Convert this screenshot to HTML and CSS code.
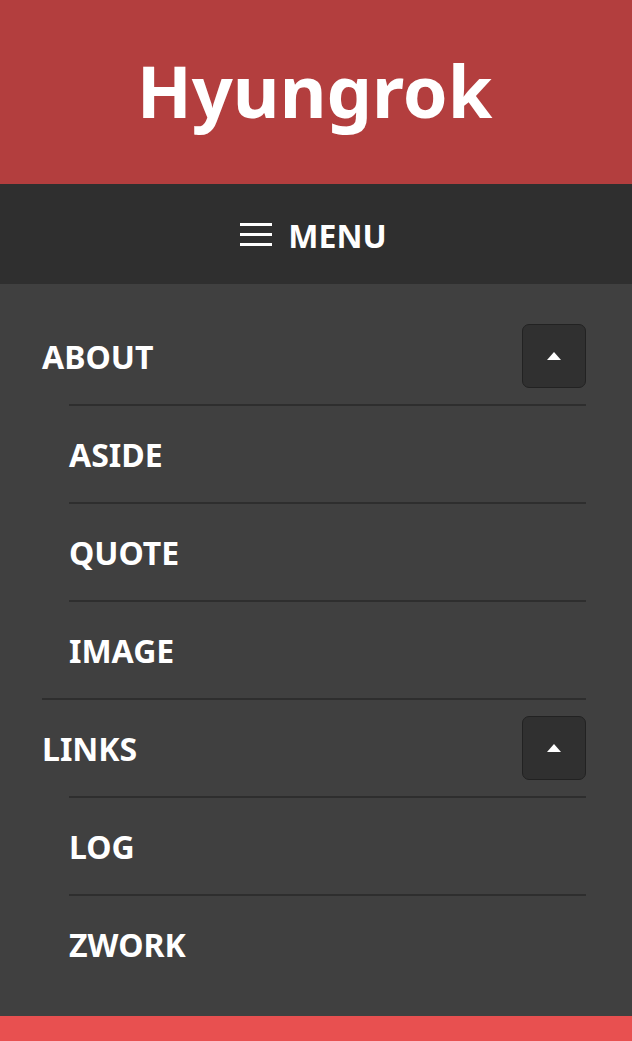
FILE: index.html
```html
<!DOCTYPE html>
<html lang="en">
<head>
  <meta charset="UTF-8">
  <title>Hyungrok</title>
  <meta name="viewport" content="width=device-width, initial-scale=1">
  <link rel="stylesheet" href="styles.css">
</head>
<body>
  <header class="site-header">
    <h1 class="site-title">Hyungrok</h1>
  </header>
  <nav class="main-nav">
    <button class="menu-toggle" type="button">
      <span class="burger"><span></span><span></span><span></span></span>
      <span class="menu-label">MENU</span>
    </button>
  </nav>
  <ul class="menu">
    <li class="menu-item">
      <div class="item-row">
        <a href="#">ABOUT</a>
        <button class="sub-toggle" type="button" aria-label="Collapse"><span class="arrow"></span></button>
      </div>
      <ul class="sub-menu">
        <li><a href="#">ASIDE</a></li>
        <li><a href="#">QUOTE</a></li>
        <li><a href="#">IMAGE</a></li>
      </ul>
    </li>
    <li class="menu-item">
      <div class="item-row">
        <a href="#">LINKS</a>
        <button class="sub-toggle" type="button" aria-label="Collapse"><span class="arrow"></span></button>
      </div>
      <ul class="sub-menu">
        <li><a href="#">LOG</a></li>
        <li><a href="#">ZWORK</a></li>
      </ul>
    </li>
  </ul>
  <footer class="site-footer"></footer>
</body>
</html>
```
FILE: styles.css
```css
:root {
  --header-bg: #b33e3e;
  --nav-bg: #2f2f2f;
  --menu-bg: #404040;
  --line: #2e2e2e;
  --footer-bg: #e85050;
}
body {
  margin: 0;
  font-family: 'Noto Sans', 'Open Sans', sans-serif;
  color: #fff;
  background: var(--menu-bg);
}
.site-header {
  background: var(--header-bg);
  height: 184px;
  display: flex;
  align-items: center;
  justify-content: center;
}
.site-title {
  margin: 0;
  font-size: 72px;
  font-weight: 700;
  line-height: 1;
  padding: 0 3px 4px 0;
}
.main-nav {
  background: var(--nav-bg);
  height: 100px;
  display: flex;
  align-items: center;
  justify-content: center;
}
.menu-toggle {
  background: none;
  border: none;
  color: #fff;
  font: inherit;
  display: flex;
  align-items: center;
  gap: 16px;
  padding: 3px 5px 0 0;
  cursor: pointer;
}
.burger {
  display: flex;
  flex-direction: column;
  gap: 7px;
  width: 32px;
  margin-top: -3px;
}
.burger span {
  display: block;
  height: 3px;
  background: #fff;
}
.menu-label {
  font-size: 32px;
  font-weight: 700;
  line-height: 1;
}
.menu {
  list-style: none;
  margin: 0;
  padding: 24px 46px 24px 42px;
}
.menu-item + .menu-item {
  border-top: 2px solid var(--line);
}
.item-row {
  height: 96px;
  display: flex;
  align-items: center;
  justify-content: space-between;
}
.menu a {
  color: #fff;
  text-decoration: none;
  font-size: 32px;
  font-weight: 700;
}
.sub-toggle {
  width: 64px;
  height: 64px;
  background: #303030;
  border: 1px solid #222;
  border-radius: 7px;
  display: flex;
  align-items: center;
  justify-content: center;
  padding: 0;
  cursor: pointer;
}
.arrow {
  width: 0;
  height: 0;
  border-left: 7px solid transparent;
  border-right: 7px solid transparent;
  border-bottom: 8px solid #fff;
}
.sub-menu {
  list-style: none;
  margin: 0 0 0 27px;
  padding: 0;
}
.sub-menu li {
  border-top: 2px solid var(--line);
  height: 96px;
  display: flex;
  align-items: center;
}
.site-footer {
  background: var(--footer-bg);
  height: 60px;
}
```
